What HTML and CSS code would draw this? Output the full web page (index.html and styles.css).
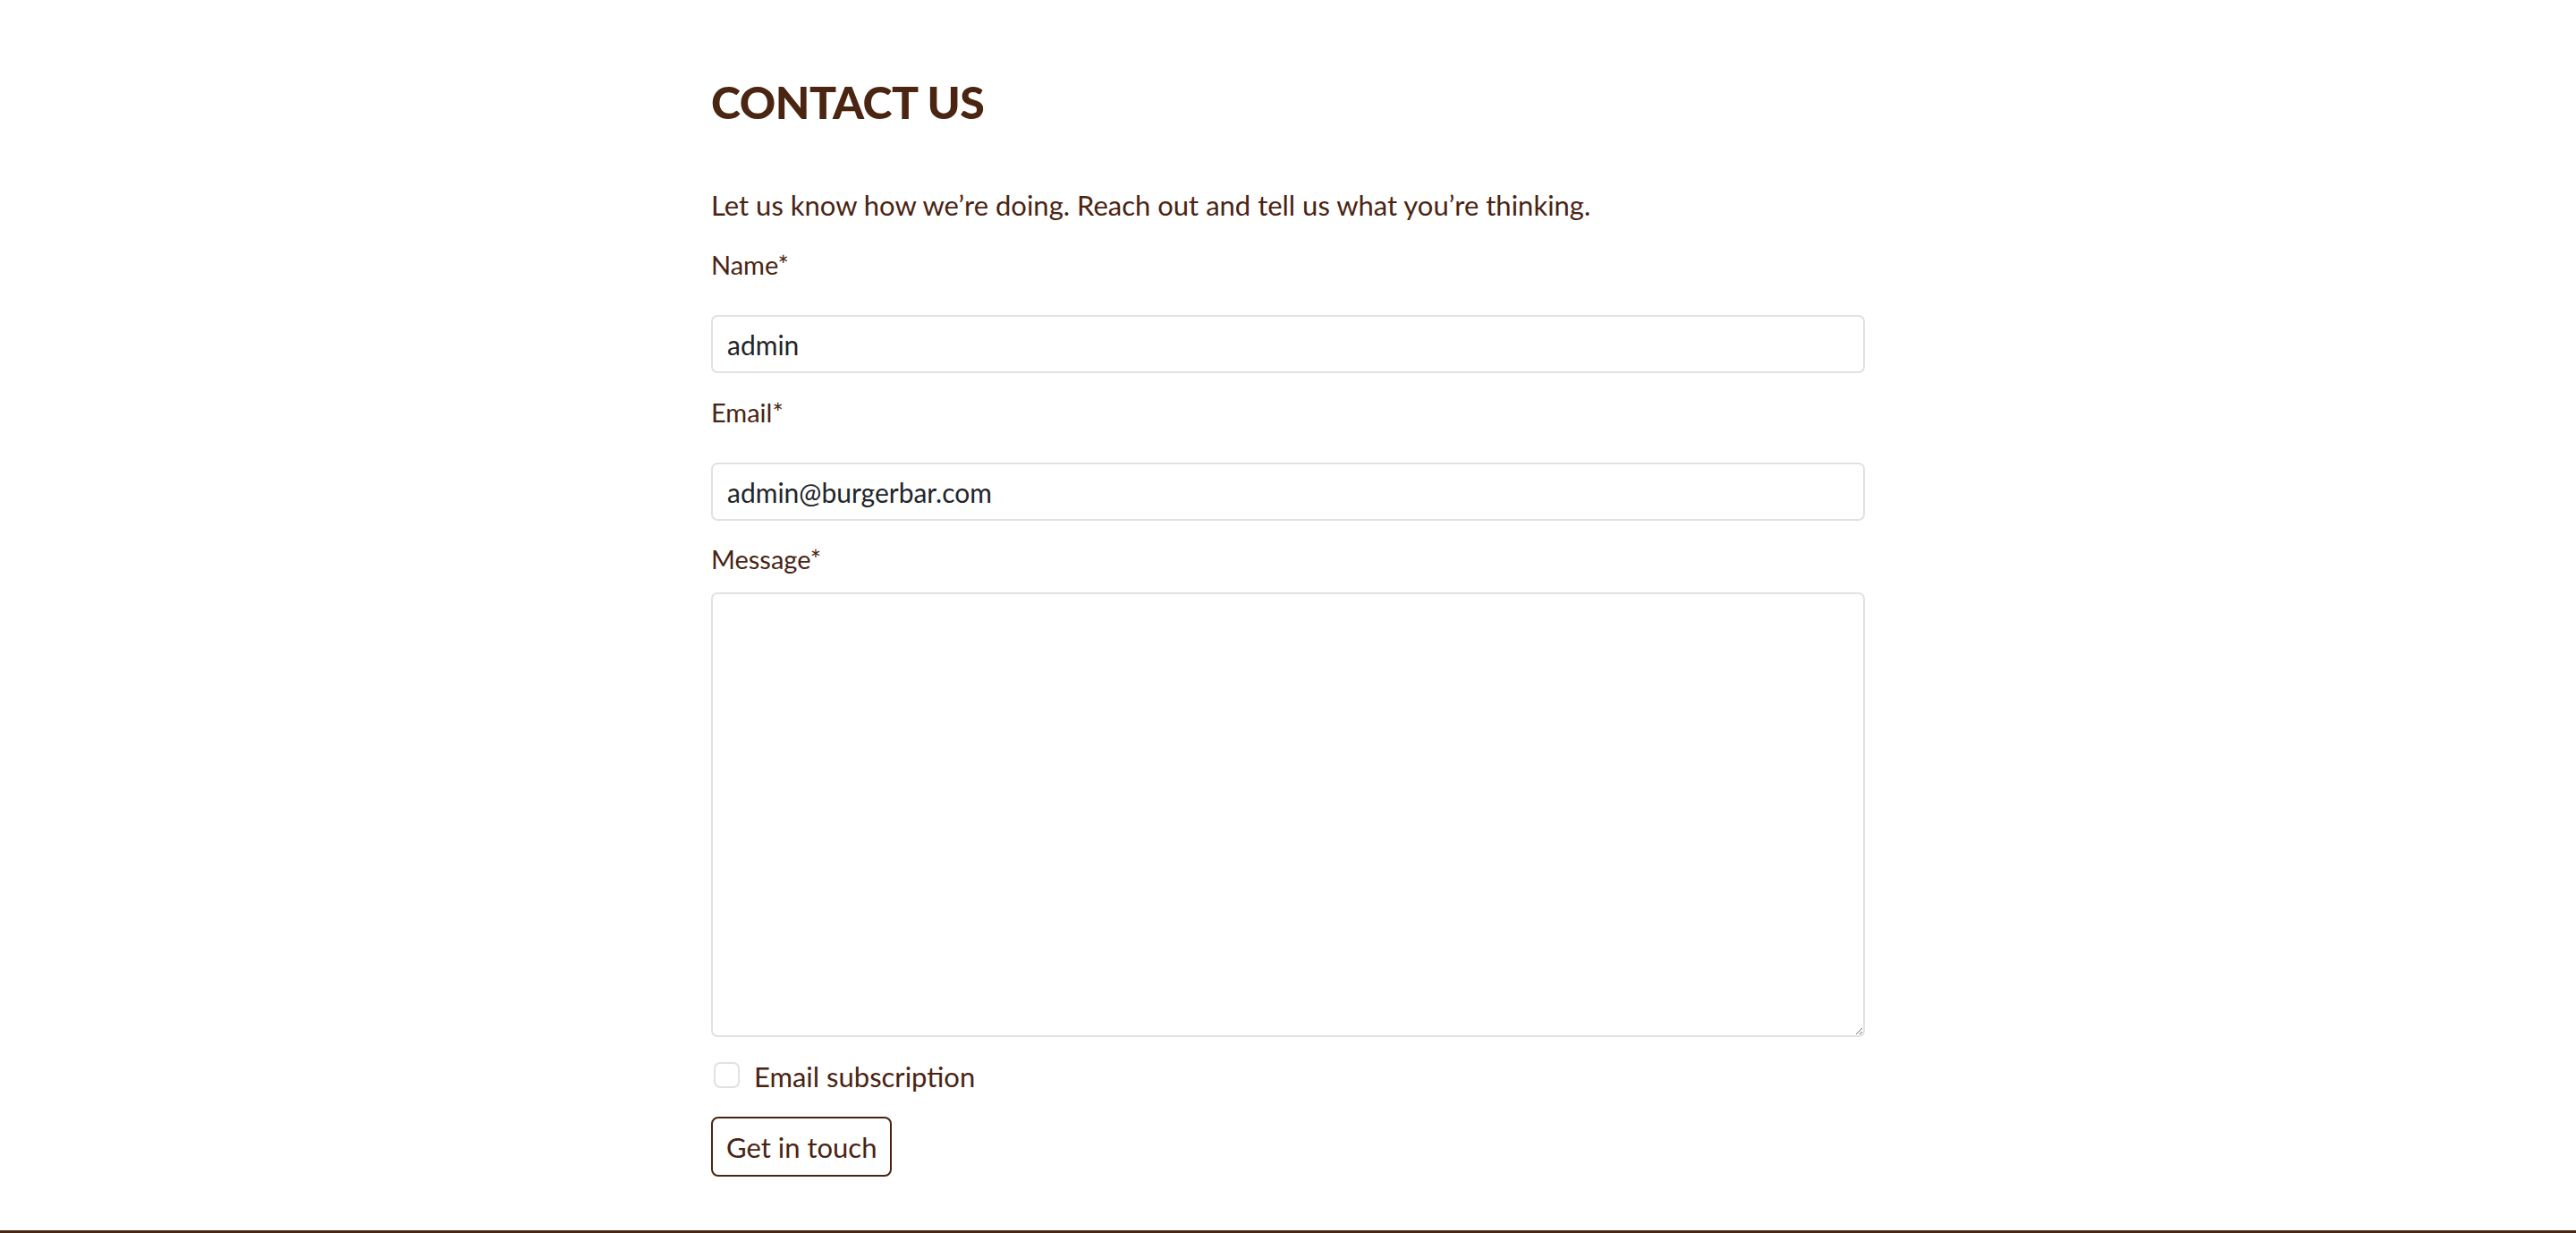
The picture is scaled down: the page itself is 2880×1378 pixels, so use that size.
FILE: index.html
```html
<!DOCTYPE html>
<html lang="en">
<head>
<meta charset="utf-8">
<title>Contact us</title>
<link rel="stylesheet" href="styles.css">
</head>
<body>
<main class="container">
  <h1 class="title">CONTACT US</h1>
  <p class="intro">Let us know how we’re doing. Reach out and tell us what you’re thinking.</p>
  <form class="form">
    <label class="label" for="name">Name*</label>
    <input class="field" id="name" type="text" value="admin">
    <label class="label" for="email">Email*</label>
    <input class="field" id="email" type="email" value="admin@burgerbar.com">
    <label class="label label-msg" for="message">Message*</label>
    <textarea class="field area" id="message"></textarea>
    <div class="check-row">
      <input class="check" id="sub" type="checkbox">
      <label class="check-label" for="sub">Email subscription</label>
    </div>
    <button class="btn" type="button">Get in touch</button>
  </form>
</main>
<footer class="footer"></footer>
</body>
</html>
```
FILE: styles.css
```css
* { box-sizing: border-box; }
html, body { margin: 0; padding: 0; background: #fff; }
body {
  font-family: Lato, "Noto Sans", sans-serif;
  color: #4a2412;
}
.container {
  width: 1290px;
  margin: 0 auto;
  padding-top: 84px;
}
.title {
  margin: 0;
  font-size: 50px;
  line-height: 60px;
  font-weight: 900;
  color: #4a2511;
  letter-spacing: -0.5px;
}
.intro {
  margin: 65px 0 0;
  font-size: 31px;
  line-height: 40px;
}
.form {
  display: flex;
  flex-direction: column;
  align-items: flex-start;
  margin-top: 27px;
}
.label {
  font-size: 29px;
  line-height: 40px;
}
.field {
  width: 100%;
  height: 65px;
  margin: 36px 0 24px;
  padding: 0 16px;
  border: 2px solid #dee2e6;
  border-radius: 7px;
  font-family: Lato, "Noto Sans", sans-serif;
  font-size: 30px;
  color: #212529;
  background: #fff;
  outline: none;
}
.label-msg { margin-top: -1px; }
.area {
  height: 497px;
  margin: 17px 0 24px;
  resize: vertical;
}
.check-row {
  display: flex;
  align-items: flex-start;
  gap: 16px;
  height: 40px;
}
.check {
  appearance: none;
  -webkit-appearance: none;
  margin: 4px 0 0 3px;
  width: 29px;
  height: 29px;
  border: 2px solid #dee2e6;
  border-radius: 7px;
  background: #fff;
}
.check-label {
  font-size: 31px;
  line-height: 40px;
}
.btn {
  margin-top: 25px;
  height: 67px;
  padding: 0 15px;
  border: 2px solid #4a2412;
  border-radius: 8px;
  background: #fff;
  color: #4a2412;
  font-family: Lato, "Noto Sans", sans-serif;
  font-size: 31px;
}
.footer {
  margin-top: 60px;
  height: 3px;
  background: #4a2412;
}
```
